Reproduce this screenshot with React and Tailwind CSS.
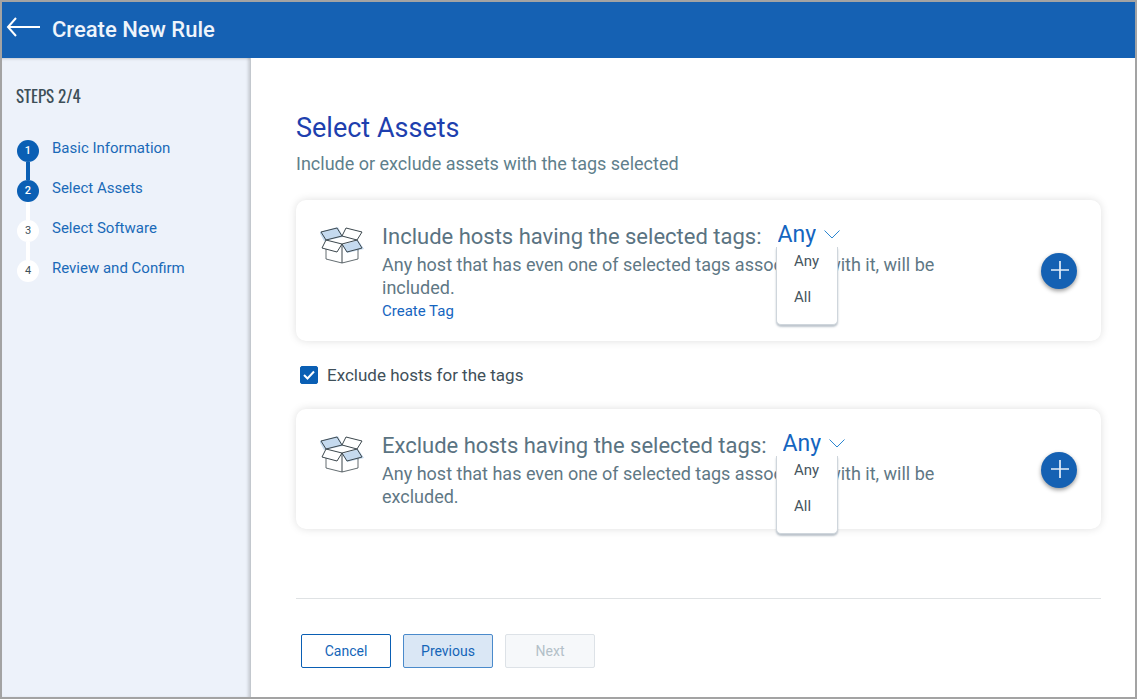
import React, { useState } from 'react';

const steps = ['Basic Information', 'Select Assets', 'Select Software', 'Review and Confirm'];

const BoxIcon = () => (
  <svg width="44" height="38" viewBox="0 0 44 38" fill="none" aria-hidden="true" className="shrink-0">
    <path d="M-1 5 L18 0 L23 10 L4 14Z" fill="#c5daef" />
    <path d="M22 18 L38 13 L44 22 L27 26Z" fill="#c5daef" />
    <g stroke="#3c474d" strokeWidth="1" strokeLinejoin="round">
      <path d="M1 5 L17 1 L22 9 L6 13Z" />
      <path d="M26 1 L42 5 L37 13 L22 9Z" />
      <path d="M6 13 L22 17 L17 25 L2 21Z" />
      <path d="M22 17 L37 13 L42 21 L27 25Z" />
      <path d="M6 22 V32 L22 36 L38 32 V22" strokeWidth="0.8" />
      <path d="M22 17 V36" />
    </g>
  </svg>
);

const Sidebar = ({ current }) => (
  <aside className="relative z-10 w-[249px] shrink-0 border-r border-[#c3c8ce] bg-[#edf2fa] px-[14px] pt-[26px] shadow-[inset_-3px_0_3px_-1px_rgba(0,0,0,0.15),inset_0_3px_3px_-2px_rgba(0,0,0,0.15)]">
    <h2 className="font-['Oswald','Liberation_Sans_Narrow',sans-serif] text-[17px] leading-6 text-[#3d4f58]">
      STEPS {current}/{steps.length}
    </h2>
    <ol className="mt-8 pl-px">
      {steps.map((step, i) => {
        const done = i < current;
        return (
          <li key={step} className="flex h-10 gap-[13px]">
            <div className="flex w-[22px] flex-col items-center">
              <span
                className={`flex size-[22px] shrink-0 items-center justify-center rounded-full text-[11px] ${
                  done ? 'bg-[#0a5fb4] font-medium text-white' : 'bg-white text-[#3d4f58]'
                }`}
              >
                {i + 1}
              </span>
              {i < steps.length - 1 && (
                <span className={`w-1 flex-1 ${i + 1 < current ? 'bg-[#0a5fb4]' : 'bg-white'}`} />
              )}
            </div>
            <a href="#" className="h-5 text-[15px] leading-4 text-[#1a6ab8]">
              {step}
            </a>
          </li>
        );
      })}
    </ol>
  </aside>
);

const TagCard = ({ id, title, description, link }) => {
  const [match, setMatch] = useState('Any');

  return (
    <section className="flex items-center rounded-[10px] bg-white pt-[22px] pr-6 pb-[21px] pl-6 shadow-[0_0_8px_rgba(0,0,0,0.13)]">
      <div className="self-start pt-[5px]">
        <BoxIcon />
      </div>
      <div className="relative ml-[18px] flex-1">
        <div className="flex h-[31px] items-center">
          <label htmlFor={id} className="pb-[2px] text-[22px] leading-7 text-[#5a7382]">
            {title}
          </label>
          <span className="ml-4 flex items-center gap-2 pb-[6px]">
            <select
              id={id}
              value={match}
              onChange={(e) => setMatch(e.target.value)}
              className="field-sizing-content appearance-none bg-transparent text-[23px] leading-[26px] text-[#1565c0] outline-none"
            >
              <option>Any</option>
              <option>All</option>
            </select>
            <svg width="16" height="9" viewBox="0 0 16 9" fill="none" stroke="#2b86d1" aria-hidden="true">
              <path d="M0.5 0.5 L8 8 L15.5 0.5" />
            </svg>
          </span>
        </div>
        <p className="max-w-[570px] text-[18px] leading-[23px] text-[#5f7885]">{description}</p>
        {link && (
          <a href="#" className="block h-[21px] text-[15px] leading-6 text-[#1565c0]">
            {link}
          </a>
        )}
        <ul className="absolute top-[25px] left-[394px] h-[78px] w-[62px] rounded-b-[5px] border-x border-b border-[#cfd6dc] bg-white shadow-[0_2px_2px_rgba(90,110,130,0.4)]">
          {['Any', 'All'].map((option) => (
            <li key={option}>
              <button
                type="button"
                onClick={() => setMatch(option)}
                className="h-9 w-full pb-2 pl-[17px] text-left text-[15px] text-[#46555e]"
              >
                {option}
              </button>
            </li>
          ))}
        </ul>
      </div>
      <button
        type="button"
        aria-label="Add tag"
        className="flex size-9 shrink-0 items-center justify-center rounded-full bg-[#1561b3] shadow-[0_2px_4px_rgba(0,0,0,0.4)]"
      >
        <svg width="20" height="20" viewBox="0 0 20 20" stroke="#e6effa" strokeWidth="1.7">
          <path d="M11 0 V18 M2 9 H20" />
        </svg>
      </button>
    </section>
  );
};

const App = () => {
  const [exclude, setExclude] = useState(true);

  return (
    <div className="flex min-h-screen flex-col border-2 border-[#a3a3a3] bg-white font-[Roboto,sans-serif]">
      <header className="flex h-14 items-center bg-[#1561b3] pl-1 text-white">
        <button type="button" aria-label="Back" className="pb-[7px]">
          <svg width="34" height="20" viewBox="0 0 34 20" fill="none" stroke="white" strokeWidth="2">
            <path d="M10 1 L2 10 L10 19 M2 10 H34" />
          </svg>
        </button>
        <h1 className="ml-3 text-[22px] leading-7 font-medium text-[#eef4fb]">Create New Rule</h1>
      </header>
      <div className="flex flex-1">
        <Sidebar current={2} />
        <main className="flex-1 pt-[54px] pr-[34px] pl-[45px]">
          <h2 className="text-[27px] leading-8 text-[#1e3fae]">Select Assets</h2>
          <p className="mt-2 text-[18px] leading-6 text-[#5f7f8c]">
            Include or exclude assets with the tags selected
          </p>
          <div className="mt-6">
            <TagCard
              id="include-match"
              title="Include hosts having the selected tags:"
              description="Any host that has even one of selected tags associated with it, will be included."
              link="Create Tag"
            />
          </div>
          <label className="mt-[22px] ml-1 flex h-6 w-fit items-center gap-[9px] text-[17px] leading-6 text-[#3f505a]">
            <span className="relative flex">
              <input
                type="checkbox"
                checked={exclude}
                onChange={(e) => setExclude(e.target.checked)}
                className="peer size-[18px] appearance-none rounded-[2px] border border-[#0a5fb4] checked:bg-[#0a5fb4]"
              />
              <svg
                width="18"
                height="18"
                viewBox="0 0 18 18"
                fill="none"
                stroke="white"
                strokeWidth="2"
                className="pointer-events-none absolute inset-0 hidden peer-checked:block"
              >
                <path d="M4 9 L7.5 12.5 L14 5.5" />
              </svg>
            </span>
            Exclude hosts for the tags
          </label>
          <div className="mt-[22px]">
            <TagCard
              id="exclude-match"
              title="Exclude hosts having the selected tags:"
              description="Any host that has even one of selected tags associated with it, will be excluded."
            />
          </div>
          <footer className="mt-[69px] flex gap-3 border-t border-[#dfe2e4] px-[5px] pt-[35px] text-sm">
            <button type="button" className="h-[34px] w-[90px] rounded-[2px] border border-[#0a5fb4] text-[#1565b8]">
              Cancel
            </button>
            <button
              type="button"
              className="h-[34px] w-[90px] rounded-[2px] border border-[#4a8acb] bg-[#dae7f5] text-[#1565b8]"
            >
              Previous
            </button>
            <button
              type="button"
              disabled
              className="h-[34px] w-[90px] rounded-[2px] border border-[#dde2e7] bg-[#f6f8fa] text-[#b3c0c8]"
            >
              Next
            </button>
          </footer>
        </main>
      </div>
    </div>
  );
};

export default App;
